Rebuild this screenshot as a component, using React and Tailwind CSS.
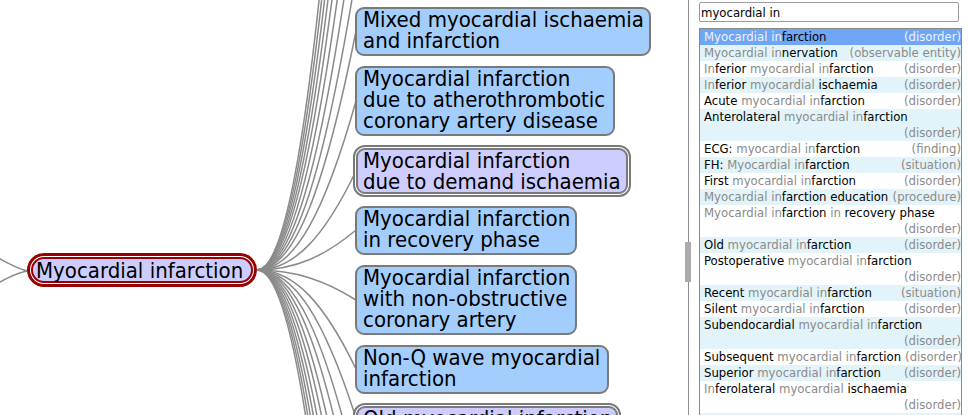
import React from 'react';

const font = "font-['DejaVu_Sans_Condensed','Liberation_Sans',sans-serif]";

const children = [
  { lines: ['Mixed myocardial ischaemia', 'and infarction'], w: 'w-[296px]' },
  { lines: ['Myocardial infarction', 'due to atherothrombotic', 'coronary artery disease'], w: 'w-[260px]' },
  { lines: ['Myocardial infarction', 'due to demand ischaemia'], w: 'w-[278px]', double: true },
  { lines: ['Myocardial infarction', 'in recovery phase'], w: 'w-[222px]' },
  { lines: ['Myocardial infarction', 'with non-obstructive', 'coronary artery'], w: 'w-[222px]' },
  { lines: ['Non-Q wave myocardial', 'infarction'], w: 'w-[254px]' },
  { lines: ['Old myocardial infarction'], w: 'w-[268px]', double: true },
];

// y where each child edge lands (children above and below the view included)
const edgeTargets = [
  -455, -395, -335, -275, -215, -150, -85, -25,
  31, 101, 171, 230, 300, 369, 418,
  470, 520, 575, 630, 690, 750, 810, 870, 930,
];

const results = [
  { term: 'Myocardial infarction', type: '(disorder)' },
  { term: 'Myocardial innervation', type: '(observable entity)' },
  { term: 'Inferior myocardial infarction', type: '(disorder)' },
  { term: 'Inferior myocardial ischaemia', type: '(disorder)' },
  { term: 'Acute myocardial infarction', type: '(disorder)' },
  { term: 'Anterolateral myocardial infarction', type: '(disorder)', wrap: true },
  { term: 'ECG: myocardial infarction', type: '(finding)' },
  { term: 'FH: Myocardial infarction', type: '(situation)' },
  { term: 'First myocardial infarction', type: '(disorder)' },
  { term: 'Myocardial infarction education', type: '(procedure)' },
  { term: 'Myocardial infarction in recovery phase', type: '(disorder)', wrap: true },
  { term: 'Old myocardial infarction', type: '(disorder)' },
  { term: 'Postoperative myocardial infarction', type: '(disorder)', wrap: true },
  { term: 'Recent myocardial infarction', type: '(situation)' },
  { term: 'Silent myocardial infarction', type: '(disorder)' },
  { term: 'Subendocardial myocardial infarction', type: '(disorder)', wrap: true },
  { term: 'Subsequent myocardial infarction', type: '(disorder)' },
  { term: 'Superior myocardial infarction', type: '(disorder)' },
  { term: 'Inferolateral myocardial ischaemia', type: '(disorder)', wrap: true },
];

const query = ['myocardial', 'in'];

function Term({ text, dim }) {
  return text.split(/(\s+)/).map((word, i) => {
    const hit = query
      .filter((q) => word.toLowerCase().startsWith(q))
      .sort((a, b) => b.length - a.length)[0];
    if (!hit) return <span key={i}>{word}</span>;
    return (
      <span key={i}>
        <span className={dim}>{word.slice(0, hit.length)}</span>
        {word.slice(hit.length)}
      </span>
    );
  });
}

function ResultRow({ item, index }) {
  const selected = index === 0;
  const bg = selected ? 'bg-[#6fa6f5]' : index % 2 ? 'bg-[#e2f4f9]' : 'bg-white';
  const dim = selected ? 'text-[#eef2ff]' : 'text-[#8a8a8a]';

  if (item.wrap) {
    return (
      <div className={`${bg} pl-[4px] whitespace-nowrap`}>
        <div className="text-black">
          <Term text={item.term} dim={dim} />
        </div>
        <div className={`text-right ${dim}`}>{item.type}</div>
      </div>
    );
  }

  return (
    <div className={`${bg} flex pl-[4px] whitespace-nowrap`}>
      <span className="text-black">
        <Term text={item.term} dim={dim} />
      </span>
      <span className={`ml-auto pl-[4px] ${dim}`}>{item.type}</span>
    </div>
  );
}

function ConceptNode({ lines, w, double }) {
  const text = lines.map((l, i) => <div key={i}>{l}</div>);
  if (double) {
    return (
      <div className={`${w} -ml-[2px] -my-px rounded-[12px] border-2 border-[#7a7a7a] bg-white p-px`}>
        <div className="rounded-[9px] border-2 border-[#7a7a7a] bg-[#ccccff] pl-[5px]">{text}</div>
      </div>
    );
  }
  return (
    <div className={`${w} rounded-[9px] border-2 border-[#7a7a7a] bg-[#a3cdfd] pl-[6px] pb-[3px]`}>
      {text}
    </div>
  );
}

function edgePath(cy) {
  return `M257 270 C 295 270 325 ${270 + 0.35 * (cy - 270)} 356 ${cy}`;
}

export default function App() {
  return (
    <div className={`${font} flex h-[415px] w-[968px] overflow-hidden bg-white`}>
      {/* Left: concept tree */}
      <div className="relative h-full w-[688px] overflow-hidden">
        <svg className="absolute inset-0 h-full w-full" fill="none" stroke="#8a8a8a" strokeWidth="1.5">
          <path d="M-60 225 C -20 245 10 268 28 271" />
          <path d="M-60 315 C -20 295 10 273 28 271" />
          {edgeTargets.map((cy) => (
            <path key={cy} d={edgePath(cy)} />
          ))}
        </svg>

        <div className="absolute left-[27px] top-[253px] w-[230px] rounded-[17px] border-[3px] border-[#990000] bg-white p-px">
          <div className="rounded-[13px] border-2 border-[#990000] bg-[#ccccff] pl-[3px] pt-[2px] text-[22px] leading-[20px] whitespace-nowrap text-black">
            Myocardial infarction
          </div>
        </div>

        <div className="absolute left-[355px] top-[7px] flex flex-col items-start gap-[10px] text-[22px] leading-[21px] whitespace-nowrap text-black">
          {children.map((c, i) => (
            <ConceptNode key={i} {...c} />
          ))}
        </div>
      </div>

      {/* Splitter */}
      <div className="relative w-px bg-[#8f8f8f]">
        <div className="absolute left-[-3px] top-[242px] h-[40px] w-[6px] bg-[#ababab]" />
      </div>

      {/* Right: search */}
      <div className="flex-1 pl-[10px] pt-[2px] text-[13px] leading-[16px]">
        <input
          readOnly
          value="myocardial in"
          className="block h-[20px] w-[260px] rounded-[2px] border border-[#9a9a9a] px-px text-[13px] text-black outline-none"
        />
        <div className="mt-[6px] h-[400px] w-[263px] overflow-hidden border border-[#888]">
          {results.map((item, i) => (
            <ResultRow key={i} item={item} index={i} />
          ))}
          <div className="h-[16px] bg-[#e2f4f9]" />
        </div>
      </div>
    </div>
  );
}
